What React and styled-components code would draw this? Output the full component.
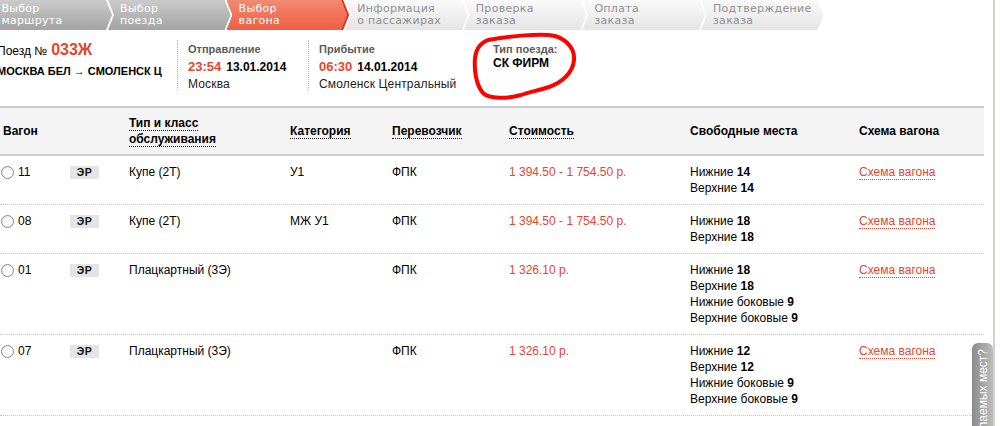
import React from "react";
import styled, { createGlobalStyle, css } from "styled-components";

const GlobalStyle = createGlobalStyle`
  html, body { margin: 0; padding: 0; background: #fff; }
  body {
    font-family: "Liberation Sans", Arial, sans-serif;
    color: #000;
    overflow: hidden;
  }
  * { box-sizing: border-box; }
`;

const RED = "#e8452c";

const Page = styled.div`
  position: relative;
  width: 995px;
  height: 426px;
  border-right: 2px solid #d6d2ca;
  overflow: hidden;
`;

/* ---------- steps ---------- */
const Steps = styled.div`
  display: flex;
  height: 30px;
  margin-left: -10.6px;
`;

const chevron = css`
  clip-path: polygon(0 0, calc(100% - 6px) 0, 100% 50%, calc(100% - 6px) 100%, 0 100%, 6px 50%);
`;

const stepBg = {
  done: "linear-gradient(#cbcbcb, #a3a3a3)",
  active: "linear-gradient(#f38a72, #ee5e43)",
  todo: "linear-gradient(#fafafa, #e5e5e5)",
};

const Step = styled.div`
  position: relative;
  flex: none;
  width: 122.6px;
  height: 30px;
  margin-right: -4px;
  padding: 3px 0 0 12px;
  ${chevron};
  background: ${(p) => (p.$state === "active" ? "#d9391c" : stepBg[p.$state])};
  color: ${(p) => (p.$state === "todo" ? "#8f8f8f" : "#fff")};
  font-family: "DejaVu Sans", Verdana, sans-serif;
  font-size: 11px;
  line-height: 12px;
  letter-spacing: 0.3px;
  ${(p) =>
    p.$state === "active" &&
    css`
      &::before {
        content: "";
        position: absolute;
        inset: 0 2px 0 0;
        background: ${stepBg.active};
        ${chevron};
      }
    `}
`;

const StepText = styled.span`
  position: relative;
  display: block;
`;

/* ---------- train info ---------- */
const Info = styled.div`
  position: relative;
  display: flex;
  margin: 10px 0 0 -3px;
  height: 50px;
`;

const TrainBlock = styled.div`
  width: 180px;
  flex: none;
  padding-top: 1px;
`;

const TrainLine = styled.div`
  font-size: 12px;
  line-height: 18px;
`;

const TrainNo = styled.span`
  color: ${RED};
  font-weight: bold;
  font-size: 16px;
  margin-left: 4px;
`;

const Route = styled.div`
  font-weight: bold;
  font-size: 11px;
  line-height: 16px;
  margin-top: 3px;
  white-space: nowrap;
`;

const InfoBlock = styled.div`
  flex: none;
  width: ${(p) => p.$width}px;
  padding-left: ${(p) => p.$pad}px;
  border-left: ${(p) => (p.$divider ? "1px dotted #b5b5b5" : "none")};
  padding-top: 1px;
`;

const Label = styled.div`
  font-weight: bold;
  font-size: 11px;
  line-height: 16px;
  color: #5a5a5a;
`;

const TimeLine = styled.div`
  line-height: 17px;
  white-space: nowrap;
`;

const Time = styled.span`
  color: ${RED};
  font-weight: bold;
  font-size: 13px;
`;

const DateText = styled.span`
  font-weight: bold;
  font-size: 12px;
  margin-left: 5px;
`;

const Station = styled.div`
  font-size: 12px;
  letter-spacing: 0.15px;
  line-height: 16px;
  color: #222;
  white-space: nowrap;
`;

const TypeValue = styled.div`
  font-weight: bold;
  font-size: 12px;
  line-height: 14px;
  margin-top: -1px;
`;

const Scribble = styled.svg`
  position: absolute;
  left: 472px;
  top: -8px;
  width: 112px;
  height: 70px;
  overflow: visible;
  pointer-events: none;
`;

/* ---------- table ---------- */
const Table = styled.div`
  width: 984px;
  margin-top: 16px;
  border-top: 2px solid #cccccc;
`;

const cols = css`
  display: grid;
  grid-template-columns: 126px 161px 102px 117px 181px 169px 128px;
`;

const HeadRow = styled.div`
  ${cols};
  align-items: center;
  background: #f4f4f4;
  border-bottom: 2px solid #cccccc;
  padding: 7px 0;
  font-weight: bold;
  font-size: 12px;
  line-height: 16px;
`;

const HeadCell = styled.div`
  padding-left: 3px;
`;

const Dotted = styled.span`
  border-bottom: 1px dotted #222;
`;

const Row = styled.div`
  ${cols};
  align-items: start;
  border-bottom: 1px dotted #c4c4c4;
  padding: 8px 0;
  font-size: 12px;
  line-height: 16px;
`;

const Cell = styled.div`
  padding-left: 3px;
  color: ${(p) => (p.$red ? RED : "#000")};
`;

const CarCell = styled.div`
  display: flex;
  align-items: center;
  height: 16px;
  padding-left: 3px;
`;

const CarNum = styled.label`
  display: flex;
  align-items: center;
  width: 67px;
  gap: 4px;
`;

const Radio = styled.input.attrs({ type: "radio" })`
  appearance: none;
  margin: 0 0 0 -2px;
  width: 13px;
  height: 13px;
  border-radius: 50%;
  border: 1px solid #8a8a8a;
  background: radial-gradient(circle at 60% 60%, #fff 40%, #dcdcdc 100%);
`;

const Badge = styled.span`
  display: inline-block;
  width: 29px;
  height: 13px;
  background: #e4e4e4;
  font-weight: bold;
  font-size: 10.5px;
  line-height: 13px;
  letter-spacing: 0.6px;
  text-align: center;
  color: #111;
`;

const SeatLine = styled.div`
  white-space: nowrap;
`;

const SchemeLink = styled.a`
  color: ${RED};
  text-decoration: none;
  border-bottom: 1px dotted ${RED};
  cursor: pointer;
`;

/* ---------- feedback tab ---------- */
const Tab = styled.div`
  position: absolute;
  left: 972px;
  top: 343px;
  width: 21px;
  height: 110px;
  border-radius: 6px 6px 0 0;
  background: linear-gradient(to right, #8b8b8b, #bdbdbd);
  display: flex;
  justify-content: center;
  padding-top: 6px;
`;

const TabText = styled.span`
  writing-mode: vertical-rl;
  transform: rotate(180deg);
  color: #fff;
  font-size: 12px;
  white-space: nowrap;
  align-self: flex-start;
`;

const steps = [
  ["Выбор", "маршрута", "done"],
  ["Выбор", "поезда", "done"],
  ["Выбор", "вагона", "active"],
  ["Информация", "о пассажирах", "todo"],
  ["Проверка", "заказа", "todo"],
  ["Оплата", "заказа", "todo"],
  ["Подтверждение", "заказа", "todo"],
];

const cars = [
  { n: "11", type: "Купе (2Т)", cat: "У1", price: "1 394.50 - 1 754.50 р.", seats: [["Нижние", "14"], ["Верхние", "14"]] },
  { n: "08", type: "Купе (2Т)", cat: "МЖ У1", price: "1 394.50 - 1 754.50 р.", seats: [["Нижние", "18"], ["Верхние", "18"]] },
  {
    n: "01",
    type: "Плацкартный (3Э)",
    cat: "",
    price: "1 326.10 р.",
    seats: [["Нижние", "18"], ["Верхние", "18"], ["Нижние боковые", "9"], ["Верхние боковые", "9"]],
  },
  {
    n: "07",
    type: "Плацкартный (3Э)",
    cat: "",
    price: "1 326.10 р.",
    seats: [["Нижние", "12"], ["Верхние", "12"], ["Нижние боковые", "9"], ["Верхние боковые", "9"]],
  },
];

export default function App() {
  return (
    <>
      <GlobalStyle />
      <Page>
        <Steps>
          {steps.map(([a, b, s], i) => (
            <Step key={i} $state={s}>
              <StepText>
                {a}
                <br />
                {b}
              </StepText>
            </Step>
          ))}
        </Steps>

        <Info>
          <TrainBlock>
            <TrainLine>
              Поезд №<TrainNo>033Ж</TrainNo>
            </TrainLine>
            <Route>МОСКВА БЕЛ → СМОЛЕНСК Ц</Route>
          </TrainBlock>
          <InfoBlock $width={131} $pad={10} $divider>
            <Label>Отправление</Label>
            <TimeLine>
              <Time>23:54</Time>
              <DateText>13.01.2014</DateText>
            </TimeLine>
            <Station>Москва</Station>
          </InfoBlock>
          <InfoBlock $width={168} $pad={10} $divider>
            <Label>Прибытие</Label>
            <TimeLine>
              <Time>06:30</Time>
              <DateText>14.01.2014</DateText>
            </TimeLine>
            <Station>Смоленск Центральный</Station>
          </InfoBlock>
          <InfoBlock $width={120} $pad={17}>
            <Label>Тип поезда:</Label>
            <TypeValue>СК ФИРМ</TypeValue>
          </InfoBlock>
          <Scribble viewBox="0 0 112 70">
            <path
              d="M 19 8 C 40 4, 73 1, 86 4 C 99 8, 106 18, 105 28 C 104 40, 94 50, 80 55 C 68 59, 60 60, 52 63 C 38 67, 20 67, 14 61 C 7 53, 5 38, 6 26 C 7 17, 11 11, 19 8 Z"
              fill="none"
              stroke="#ff0000"
              strokeWidth="4"
              strokeLinejoin="round"
            />
          </Scribble>
        </Info>

        <Table>
          <HeadRow>
            <HeadCell>Вагон</HeadCell>
            <HeadCell>
              <Dotted>Тип и класс</Dotted>
              <br />
              <Dotted>обслуживания</Dotted>
            </HeadCell>
            <HeadCell>
              <Dotted>Категория</Dotted>
            </HeadCell>
            <HeadCell>
              <Dotted>Перевозчик</Dotted>
            </HeadCell>
            <HeadCell>
              <Dotted>Стоимость</Dotted>
            </HeadCell>
            <HeadCell>Свободные места</HeadCell>
            <HeadCell>Схема вагона</HeadCell>
          </HeadRow>
          {cars.map((c) => (
            <Row key={c.n}>
              <CarCell>
                <CarNum>
                  <Radio name="car" />
                  {c.n}
                </CarNum>
                <Badge>ЭР</Badge>
              </CarCell>
              <Cell>{c.type}</Cell>
              <Cell>{c.cat}</Cell>
              <Cell>ФПК</Cell>
              <Cell $red>{c.price}</Cell>
              <Cell>
                {c.seats.map(([k, v]) => (
                  <SeatLine key={k}>
                    {k} <b>{v}</b>
                  </SeatLine>
                ))}
              </Cell>
              <Cell>
                <SchemeLink>Схема вагона</SchemeLink>
              </Cell>
            </Row>
          ))}
        </Table>

        <Tab>
          <TabText>Нет желаемых мест?</TabText>
        </Tab>
      </Page>
    </>
  );
}
